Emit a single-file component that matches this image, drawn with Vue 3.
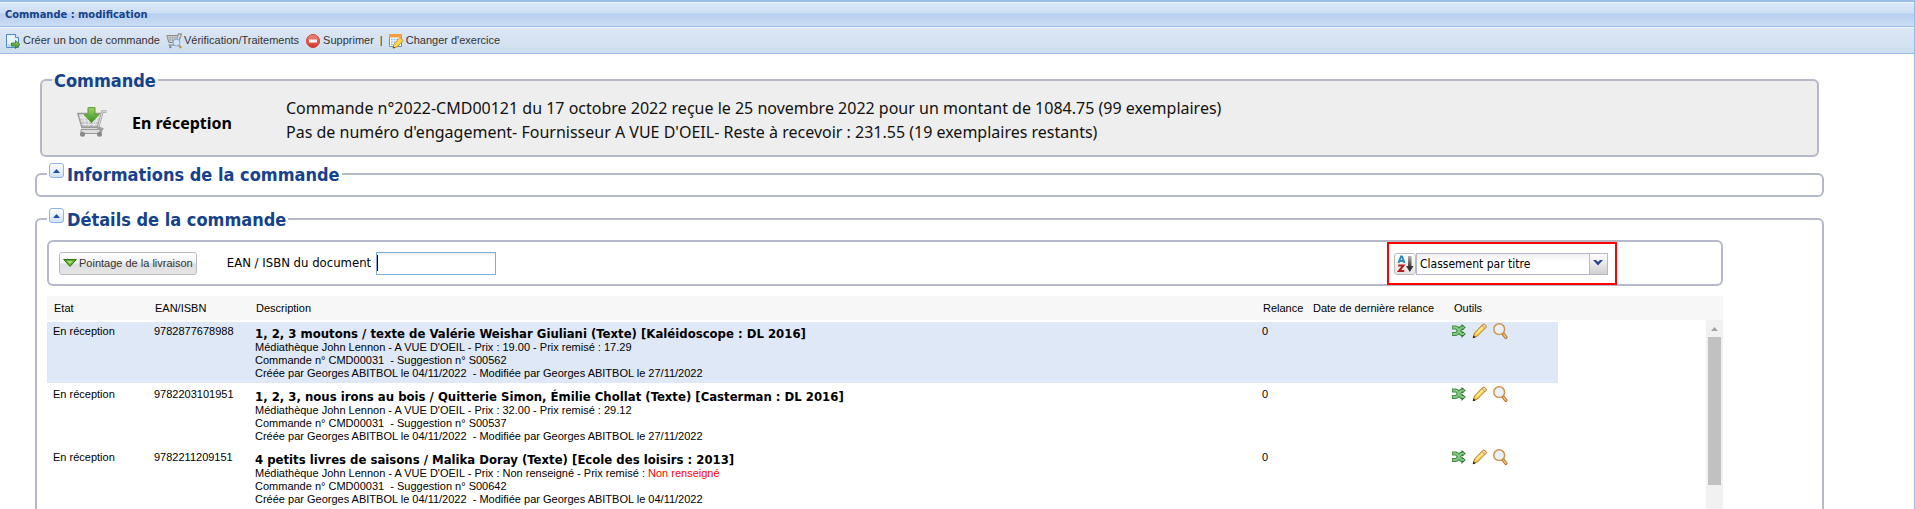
<script setup>
import { ref } from 'vue'

const ean = ref('')
const sort = ref('titre')
const summary = [
  'Commande n°2022-CMD00121 du 17 octobre 2022 reçue le 25 novembre 2022 pour un montant de 1084.75 (99 exemplaires)',
  "Pas de numéro d'engagement- Fournisseur A VUE D'OEIL- Reste à recevoir : 231.55 (19 exemplaires restants)",
]
const rows = [
  {
    ean: '9782877678988',
    title: '1, 2, 3 moutons / texte de Valérie Weishar Giuliani (Texte) [Kaléidoscope : DL 2016]',
    price: '19.00', net: '17.29', suggestion: 'S00562', updated: '27/11/2022', selected: true,
  },
  {
    ean: '9782203101951',
    title: '1, 2, 3, nous irons au bois / Quitterie Simon, Émilie Chollat (Texte) [Casterman : DL 2016]',
    price: '32.00', net: '29.12', suggestion: 'S00537', updated: '27/11/2022',
  },
  {
    ean: '9782211209151',
    title: '4 petits livres de saisons / Malika Doray (Texte) [Ecole des loisirs : 2013]',
    price: 'Non renseigné', net: 'Non renseigné', missing: true, suggestion: 'S00642', updated: '04/11/2022',
  },
]
</script>

<template>
  <div class="window">
    <svg class="defs" width="0" height="0" aria-hidden="true">
      <defs>
        <linearGradient id="gGreen" x1="0" y1="0" x2="0" y2="1">
          <stop offset="0" stop-color="#9ad36a" /><stop offset="1" stop-color="#3c8f1d" />
        </linearGradient>
        <linearGradient id="gRed" x1="0" y1="0" x2="0" y2="1">
          <stop offset="0" stop-color="#f08a80" /><stop offset="1" stop-color="#d93226" />
        </linearGradient>
        <linearGradient id="gCart" x1="0" y1="0" x2="0" y2="1">
          <stop offset="0" stop-color="#e6e6e6" /><stop offset="1" stop-color="#b4b4b4" />
        </linearGradient>
        <linearGradient id="gArrow" x1="0" y1="0" x2="0" y2="1">
          <stop offset="0" stop-color="#b9b1b1" /><stop offset="0.7" stop-color="#3b3030" />
        </linearGradient>
      </defs>
    </svg>

    <header class="titlebar"><h1>Commande : modification</h1></header>

    <nav class="toolbar">
      <button type="button">
        <svg width="16" height="16" viewBox="0 0 16 16">
          <path d="M1.5 1.5h9l3 3v10h-12z" fill="#e8f3fd" stroke="#4f88c6" />
          <path d="M10.5 1.5v3h3" fill="#fff" stroke="#4f88c6" />
          <path d="M2.5 11h6v3h-6z" fill="#b5d8f5" />
          <path d="M6.5 10h4V7.5l4.500 4-4.500 4V13h-4z" fill="url(#gGreen)" stroke="#35761c" stroke-width=".8" />
        </svg>Créer un bon de commande
      </button>
      <button type="button">
        <svg width="16" height="16" viewBox="0 0 16 16">
          <path d="M.8 2.500h11l-2 7h-7z" fill="#d9d9d9" stroke="#8a8a8a" />
          <path d="M1.500 4.700h10M2 7h9M4 3v6M6.500 3v6M9 3v6" stroke="#999" stroke-width=".6" />
          <path d="M11.500 3l1-2h3l-3.500 9" fill="none" stroke="#999" stroke-width="1.500" />
          <path d="M2.500 12h6" stroke="#999" stroke-width="1.500" />
          <circle cx="4.300" cy="14" r="1.300" fill="#888" />
          <circle cx="10.500" cy="9.500" r="3.500" fill="#cfe4f8" stroke="#7ba7d4" />
          <path d="M13 12.500l2.200 2.500" stroke="#c2914f" stroke-width="2" />
        </svg>Vérification/Traitements
      </button>
      <button type="button">
        <svg width="16" height="16" viewBox="0 0 16 16">
          <circle cx="8" cy="8" r="6.500" fill="url(#gRed)" stroke="#c9463a" />
          <rect x="4" y="6.500" width="8" height="3" rx=".5" fill="#fff" />
        </svg>Supprimer
      </button>
      <span class="sep">|</span>
      <button type="button">
        <svg width="16" height="16" viewBox="0 0 16 16">
          <path d="M1.500 1.500h12v12h-12z" fill="#fff" stroke="#5b94d4" />
          <path d="M1 1h13v3.500H1z" fill="#f2a044" />
          <path d="M3 6.500h9M3 9h9M3 11.500h9" stroke="#8db7e3" stroke-width="1.500" stroke-dasharray="1.700 1" />
          <path d="M5 15.200l.8-4L12 4.500 15.200 7.500 9 14z" fill="#ffd84d" stroke="#c88a1c" stroke-width=".9" />
          <path d="M5 15.200l.5-2 1.700 1.500z" fill="#5b3a12" />
        </svg>Changer d'exercice
      </button>
    </nav>

    <main>
      <fieldset class="box order">
        <legend>Commande</legend>
        <div class="order-body">
          <div class="status">
            <svg width="30" height="30" viewBox="0 0 30 30">
              <path d="M.8 6.500h24l-3.500 14H5z" fill="url(#gCart)" stroke="#989898" stroke-width="1.400" />
              <path d="M2.500 10.500h20M3.500 14h18M4.500 17.500h16M6 7l2.500 12M11 7l1 12M16.500 7v12M21 8l-3.500 11" stroke="#f6f6f6" stroke-width="1" opacity=".7" />
              <path d="M29.500 4.500h-4L21 20.500l4 1.500-1.500 3H5" fill="none" stroke="#a2a2a2" stroke-width="2.600" />
              <path d="M29 4.300h-3.500l-4 15" fill="none" stroke="#ededed" stroke-width=".8" />
              <path d="M4 22.500h19v4H4z" fill="#ddd" stroke="#999" />
              <circle cx="5.500" cy="27.300" r="2.500" fill="#888" /><circle cx="22.500" cy="27.300" r="2.500" fill="#888" />
              <path d="M11 .6h7v7h4L14.500 15.500 7 7.600h4z" fill="url(#gGreen)" stroke="#5a9f36" />
            </svg>
            <strong>En réception</strong>
          </div>
          <div class="summary"><p v-for="line in summary" :key="line">{{ line }}</p></div>
        </div>
      </fieldset>

      <fieldset class="box info">
        <legend>
          <button type="button" class="toggle" aria-label="Replier les informations">
            <svg width="7" height="4" viewBox="0 0 7 4"><path d="M0 4L3.500 0 7 4z" fill="#1f4fa8" /></svg>
          </button>Informations de la commande
        </legend>
      </fieldset>

      <fieldset class="box details">
        <legend>
          <button type="button" class="toggle" aria-label="Replier les détails">
            <svg width="7" height="4" viewBox="0 0 7 4"><path d="M0 4L3.500 0 7 4z" fill="#1f4fa8" /></svg>
          </button>Détails de la commande
        </legend>

        <div class="filters">
          <button type="button" class="delivery">
            <svg width="14" height="8" viewBox="0 0 14 8"><path d="M.7.5h12.600L7 7.500z" fill="#5faf30" stroke="#2c7414" /><path d="M4 2h6L7 5z" fill="#a9dd7c" /></svg>
            Pointage de la livraison
          </button>
          <label for="ean">EAN / ISBN du document</label>
          <input id="ean" v-model="ean" type="text" />
          <div class="sorting">
            <button type="button" class="sort-btn" aria-label="Inverser l'ordre">
              <svg width="17" height="18" viewBox="0 0 17 18">
                <path d="M1.500 8L4 1.500h1L7.500 8M2.500 6h4" fill="none" stroke="#2f8bb8" stroke-width="2" />
                <path d="M1.200 10.500h5.300L2 16h5.300" fill="none" stroke="#b81c1c" stroke-width="2" />
                <path d="M11 1h3.500v10h2l-3.700 6-3.800-6h2z" fill="url(#gArrow)" />
              </svg>
            </button>
            <div class="combo">
              <select v-model="sort" aria-label="Classement">
                <option value="titre">Classement par titre</option>
                <option value="date">Classement par date</option>
              </select>
              <svg width="10" height="6" viewBox="0 0 10 6"><path d="M0 0h3l2 2 2-2h3L5 5.500z" fill="#27468b" /></svg>
            </div>
          </div>
        </div>

        <div class="grid">
          <table class="head">
            <colgroup><col class="c1" /><col class="c1" /><col /><col class="c4" /><col class="c5" /><col class="c6h" /></colgroup>
            <thead>
              <tr><th>Etat</th><th>EAN/ISBN</th><th>Description</th><th>Relance</th><th>Date de dernière relance</th><th>Outils</th></tr>
            </thead>
          </table>
          <div class="scroll">
            <table class="body">
              <colgroup><col class="c1" /><col class="c1" /><col /><col class="c4" /><col class="c5" /><col class="c6" /></colgroup>
              <tbody>
                <tr v-for="r in rows" :key="r.ean" :class="{ selected: r.selected }">
                  <td>En réception</td>
                  <td>{{ r.ean }}</td>
                  <td>
                    <h2>{{ r.title }}</h2>
                    <p>Médiathèque John Lennon - A VUE D'OEIL - Prix : {{ r.price }} - Prix remisé : <span :class="{ missing: r.missing }">{{ r.net }}</span></p>
                    <p>Commande n° CMD00031&nbsp; - Suggestion n° {{ r.suggestion }}</p>
                    <p>Créée par Georges ABITBOL le 04/11/2022&nbsp; - Modifiée par Georges ABITBOL le {{ r.updated }}</p>
                  </td>
                  <td>0</td>
                  <td></td>
                  <td>
                    <div class="tools">
                      <button type="button" aria-label="Transférer">
                        <svg width="16" height="16" viewBox="0 0 16 16">
                          <path d="M1 4.500h3.500c3.500 0 3 6.500 6.500 6.500h2M1 11h3.500c3.500 0 3-6.500 6.500-6.500h2" fill="none" stroke="#3f8a43" stroke-width="4" />
                          <path d="M10.500 1l4.300 3.500L10.500 8zM10.500 7.500l4.300 3.500-4.300 4z" fill="#2c7431" />
                          <path d="M1.700 4.500h3c3.300 0 3 6.500 6.500 6.500h2M1.700 11h3c3.300 0 3-6.500 6.500-6.500h2" fill="none" stroke="#86c986" stroke-width="2" />
                        </svg>
                      </button>
                      <button type="button" aria-label="Modifier">
                        <svg width="16" height="16" viewBox="0 0 16 16">
                          <path d="M1.300 14.500l1.200-4.500L10.800 1.500q1.300-.8 2.500.5t.5 2.500L5.500 13z" fill="#f9cf4a" stroke="#b9752a" />
                          <path d="M4.500 10.500L11 4" stroke="#fff3a8" stroke-width="1.500" />
                          <path d="M10 2.500l3 3 1.200-1.300q.4-1-.6-2.100t-2.200-.8z" fill="#fbd3ad" stroke="#b9752a" stroke-width=".7" />
                          <path d="M.7 15.200l.8-3 2.200 2.200z" fill="#3b2508" />
                        </svg>
                      </button>
                      <button type="button" aria-label="Consulter">
                        <svg width="16" height="16" viewBox="0 0 16 16">
                          <path d="M9.800 10.500l3 3.800" stroke="#b4722e" stroke-width="3.400" stroke-linecap="round" />
                          <path d="M10.800 11.600l2 2.600" stroke="#edc58e" stroke-width="1.500" stroke-linecap="round" />
                          <circle cx="6.200" cy="6.200" r="5.400" fill="#e9f2fa" stroke="#cf9450" stroke-width="1.500" />
                        </svg>
                      </button>
                    </div>
                  </td>
                </tr>
              </tbody>
            </table>
            <div class="track" aria-hidden="true">
              <svg width="7" height="4" viewBox="0 0 7 4"><path d="M0 4L3.500 0 7 4z" fill="#a3a3a3" /></svg>
              <div class="thumb"></div>
            </div>
          </div>
        </div>
      </fieldset>
    </main>
  </div>
</template>

<style>
body { margin: 0; background: #fff; }
</style>

<style scoped>
* { box-sizing: border-box; }
.window {
  height: 100vh;
  overflow: hidden;
  border-top: 2px solid #99bce8;
  border-right: 1px solid #99bce8;
  font: 11px/13px "Liberation Sans", Arial, sans-serif;
  color: #000;
}
.defs { position: absolute; }
button { font: inherit; color: inherit; border: 0; background: none; padding: 0; margin: 0; }
h1, h2, p { margin: 0; }

.titlebar {
  height: 25px;
  padding: 0 5px;
  border-top: 1px solid #f2f7fd;
  border-bottom: 1px solid #99bce8;
  background: linear-gradient(#dae7f6, #cddef3 45%, #b7ceee 46%, #cbddf4);
}
h1 { font: bold 11px/24px "DejaVu Sans Condensed", Tahoma, sans-serif; color: #15428b; }

.toolbar {
  height: 27px;
  padding: 0 5px;
  display: flex;
  align-items: center;
  border-top: 1px solid #f2f6fc;
  border-bottom: 1px solid #99bce8;
  background: linear-gradient(#dce6f5, #cedeee);
  color: #333;
}
.toolbar button { display: flex; align-items: center; gap: 2px; margin-right: 6px; }
.sep { margin-right: 5px; }

main { padding: 15px 90px 0 35px; }
.box { min-width: 0; margin: 0; padding: 0; border: 2px solid #b5b8c8; border-radius: 6px; }
legend {
  display: flex;
  gap: 3px;
  height: 22px;
  margin-left: 10px;
  padding: 0 2px;
  font: bold 18px/24px "DejaVu Sans Condensed", Tahoma, sans-serif;
  color: #15428b;
}
.order { margin: 0 5px; background: #eee; }
.order-body { display: flex; height: 64px; padding: 5px 0 0 35px; }
.status { display: flex; align-items: center; gap: 25px; width: 209px; height: 52px; }
.status strong { padding-top: 2px; font: bold 16px/24px "Noto Sans", Tahoma, sans-serif; }
.summary { font: 16px/24px "Noto Sans", "Open Sans", sans-serif; color: #111; }

.info { margin-top: 6px; padding-bottom: 10px; }
.toggle {
  display: flex;
  align-items: center;
  justify-content: center;
  width: 15px;
  height: 15px;
  border: 1px solid #8db4e6;
  border-radius: 3px;
  background: linear-gradient(#fff, #cfe3fb);
}

.details { margin-top: 11px; padding: 10px 99px 20px 10px; }
.details legend { margin-left: 0; }
.filters {
  display: flex;
  align-items: center;
  height: 46px;
  padding: 0 104px 0 10px;
  border: 2px solid #b5b8c8;
  border-radius: 6px;
}
.delivery {
  display: flex;
  align-items: center;
  gap: 2px;
  height: 23px;
  padding: 0 3px;
  border: 1px solid #bbb;
  border-radius: 3px;
  background: linear-gradient(#fff, #f1f1f1 48%, #dedede 52%, #e6e6e6);
  color: #333;
}
.filters label { margin: 0 5px 0 30px; font: 13px/16px "DejaVu Sans Condensed", Tahoma, sans-serif; }
.filters input {
  width: 120px;
  height: 23px;
  padding: 1px 3px;
  border: 1px solid #7eadd9;
  outline: 0;
  font: 12px/16px "DejaVu Sans Condensed", Tahoma, sans-serif;
  background: linear-gradient(#000, #000) 0 2px / 1px 16px no-repeat, linear-gradient(#f0f0f0, #fff 4px);
}
.sorting {
  display: flex;
  align-items: center;
  height: 43px;
  margin: 0 0 -1px auto;
  padding: 0 7px 0 5px;
  border: 2px solid #f00;
}
.sort-btn {
  display: flex;
  align-items: center;
  justify-content: center;
  width: 22px;
  height: 22px;
  border: 1px solid #bbb;
  border-radius: 3px;
  background: linear-gradient(#fff, #e4e4e4);
}
.combo { position: relative; width: 192px; }
.combo select {
  display: block;
  width: 100%;
  height: 22px;
  padding: 0 20px 0 3px;
  border: 1px solid #b5b8c8;
  border-radius: 0;
  appearance: none;
  outline: 0;
  font: 12px/20px "DejaVu Sans Condensed", Tahoma, sans-serif;
  color: #000;
  background:
    linear-gradient(#b5b8c8, #b5b8c8) right 17px top / 1px 100% no-repeat,
    linear-gradient(#fff, #d0d0d0) right / 17px 100% no-repeat,
    linear-gradient(#f0f0f0, #fff 8px);
}
.combo svg { position: absolute; right: 5px; top: 7px; pointer-events: none; }

.grid { margin-top: 10px; }
table { width: 100%; table-layout: fixed; border-spacing: 0; }
.c1 { width: 101px; }
.c4 { width: 50px; }
.c5 { width: 141px; }
.c6 { width: 111px; }
.c6h { width: 276px; }
.head { background: #f7f7f7; }
.head th { height: 24px; padding: 0 0 0 7px; text-align: left; font-weight: normal; white-space: nowrap; }
.scroll { display: flex; justify-content: space-between; height: 240px; }
.body { width: calc(100% - 165px); height: max-content; border-spacing: 0 2px; }
.body td { height: 61px; padding: 3px 0 3px 6px; vertical-align: top; }
.selected { background: #dfe8f6; }
h2 { padding-top: 2px; font: bold 13px/14px "DejaVu Sans Condensed", Tahoma, sans-serif; }
.missing { color: #f00; }
.body td:last-child { padding: 0 0 0 4px; }
.tools { display: flex; gap: 5px; padding-top: 1px; }
.tools svg { display: block; }
.track { display: flex; flex-direction: column; align-items: center; width: 17px; padding-top: 7px; background: #f1f1f1; }
.thumb { width: 13px; height: 148px; margin-top: 6px; background: #c1c1c1; }
</style>
